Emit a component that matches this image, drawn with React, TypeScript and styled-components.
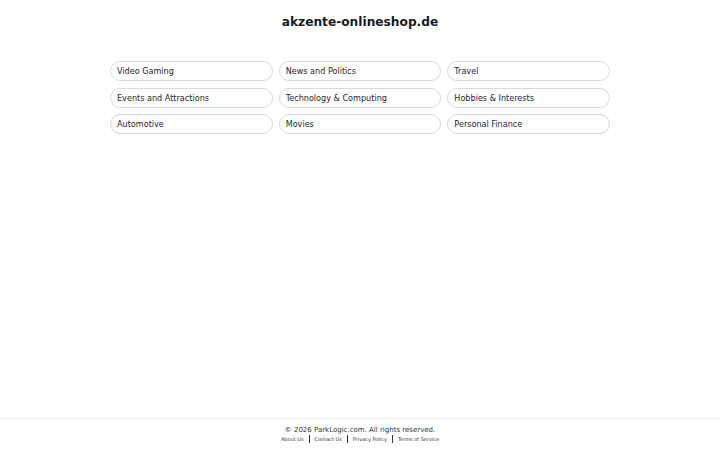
import styled, { createGlobalStyle } from 'styled-components';

const GlobalStyle = createGlobalStyle`
  html, body {
    margin: 0;
    padding: 0;
    background: #ffffff;
    font-family: "DejaVu Sans", "Liberation Sans", sans-serif;
    color: #1f2430;
  }
`;

const Page = styled.div`
  display: flex;
  flex-direction: column;
  min-height: 100vh;
`;

const Main = styled.main`
  flex: 1;
  display: flex;
  flex-direction: column;
  align-items: center;
`;

const Title = styled.h1`
  margin: 14px 0 0;
  font-size: 12.2px;
  line-height: 16px;
  font-weight: bold;
  color: #161a22;
`;

const LinkGrid = styled.div`
  margin-top: 31px;
  width: 500px;
  display: grid;
  grid-template-columns: repeat(3, 1fr);
  column-gap: 6px;
  row-gap: 6.5px;
`;

const Pill = styled.a`
  box-sizing: border-box;
  display: flex;
  align-items: center;
  height: 20px;
  padding: 0 6px;
  border: 1px solid #d6d9de;
  border-radius: 10px;
  font-size: 8.1px;
  color: #1f2430;
  text-decoration: none;
`;

const Footer = styled.footer`
  border-top: 1px solid #eceef1;
  padding: 7px 0;
  text-align: center;
`;

const Copy = styled.div`
  font-size: 7px;
  line-height: 9px;
  color: #2f3440;
`;

const Links = styled.div`
  display: flex;
  justify-content: center;
  align-items: center;
  gap: 5px;
  font-size: 5px;
  line-height: 8px;
  color: #2f3440;
`;

const Sep = styled.span`
  width: 1px;
  height: 8px;
  background: #2f3440;
`;

const topics = [
  'Video Gaming',
  'News and Politics',
  'Travel',
  'Events and Attractions',
  'Technology & Computing',
  'Hobbies & Interests',
  'Automotive',
  'Movies',
  'Personal Finance',
];

const footerLinks = ['About Us', 'Contact Us', 'Privacy Policy', 'Terms of Service'];

export default function App() {
  return (
    <Page>
      <GlobalStyle />
      <Main>
        <Title>akzente-onlineshop.de</Title>
        <LinkGrid>
          {topics.map((t) => (
            <Pill key={t} href="#">
              {t}
            </Pill>
          ))}
        </LinkGrid>
      </Main>
      <Footer>
        <Copy>© 2026 ParkLogic.com. All rights reserved.</Copy>
        <Links>
          {footerLinks.map((l, i) => (
            <span key={l} style={{ display: 'contents' }}>
              {i > 0 && <Sep />}
              <span>{l}</span>
            </span>
          ))}
        </Links>
      </Footer>
    </Page>
  );
}
